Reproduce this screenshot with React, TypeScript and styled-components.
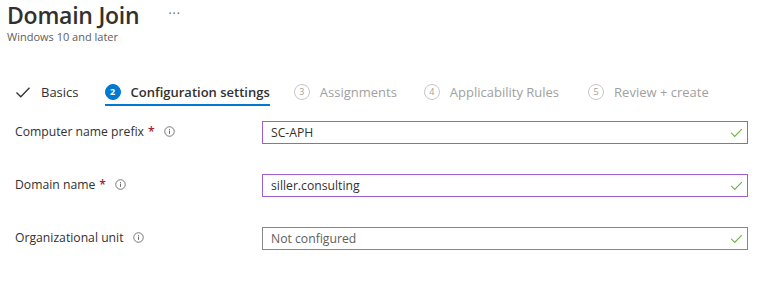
import React from "react";
import styled, { createGlobalStyle } from "styled-components";

const GlobalStyle = createGlobalStyle`
  html, body {
    margin: 0;
    padding: 0;
    background: #ffffff;
    font-family: "Open Sans", "Noto Sans", sans-serif;
    color: #323130;
  }
`;

const Page = styled.div`
  width: 768px;
  height: 281px;
  overflow: hidden;
`;

const Header = styled.div`
  padding: 2px 0 0 7px;
`;

const TitleRow = styled.div`
  display: flex;
  align-items: center;
  height: 27px;
`;

const Title = styled.h1`
  margin: 0;
  font-size: 23px;
  font-weight: 600;
  line-height: 27px;
  letter-spacing: -0.25px;
  color: #323130;
`;

const More = styled.span`
  margin-left: 29px;
  font-size: 12px;
  color: #605e5c;
  letter-spacing: 1px;
  line-height: 12px;
  position: relative;
  top: -2px;
`;

const Subtitle = styled.div`
  font-size: 11px;
  line-height: 15px;
  color: #605e5c;
`;

const Steps = styled.nav`
  display: flex;
  align-items: stretch;
  height: 26px;
  margin-top: 36px;
  padding-left: 15px;
`;

const Step = styled.div<{ $active?: boolean; $done?: boolean; $gap: number }>`
  display: flex;
  align-items: center;
  gap: 10px;
  margin-right: ${(p) => p.$gap}px;
  font-size: 13px;
  color: ${(p) => (p.$active || p.$done ? "#323130" : "#a19f9d")};
  font-weight: ${(p) => (p.$active ? 600 : 400)};
  border-bottom: 2px solid ${(p) => (p.$active ? "#0078d4" : "transparent")};
  box-sizing: border-box;
  padding-bottom: 1px;
`;

const Num = styled.span<{ $active?: boolean }>`
  width: 16px;
  height: 16px;
  border-radius: 50%;
  box-sizing: border-box;
  display: inline-flex;
  align-items: center;
  justify-content: center;
  font-size: 9px;
  font-weight: ${(p) => (p.$active ? 700 : 400)};
  background: ${(p) => (p.$active ? "#0078d4" : "transparent")};
  color: ${(p) => (p.$active ? "#ffffff" : "#a19f9d")};
  border: 1px solid ${(p) => (p.$active ? "#0078d4" : "#c8c6c4")};
`;

const Form = styled.div`
  display: flex;
  flex-direction: column;
  gap: 30px;
  margin-top: 15px;
  padding: 0 20px 0 15px;
`;

const Row = styled.div`
  display: grid;
  grid-template-columns: 247px 1fr;
  align-items: center;
`;

const Label = styled.label`
  display: flex;
  align-items: center;
  font-size: 12.2px;
  line-height: 16px;
  color: #323130;
  position: relative;
  top: -1px;
`;

const Req = styled.span`
  color: #a4262c;
  margin-left: 4px;
  font-weight: 600;
`;

const Info = styled.span`
  display: inline-flex;
  margin-left: 9px;
`;

const Field = styled.div<{ $valid?: boolean }>`
  display: flex;
  align-items: center;
  justify-content: space-between;
  height: 23px;
  box-sizing: border-box;
  border: 1px solid ${(p) => (p.$valid ? "#a35dcc" : "#8a8886")};
  padding: 0 4px 0 8px;
  font-size: 12.2px;
  color: ${(p) => (p.$valid ? "#323130" : "#605e5c")};
`;

function InfoIcon() {
  return (
    <svg width="11" height="11" viewBox="0 0 12 12">
      <circle cx="6" cy="6" r="5.2" fill="none" stroke="#605e5c" strokeWidth="0.9" />
      <rect x="5.5" y="5" width="1" height="3.6" fill="#605e5c" />
      <rect x="5.5" y="3.2" width="1" height="1" fill="#605e5c" />
    </svg>
  );
}

function Check({ color, size, w }: { color: string; size: number; w: number }) {
  return (
    <svg width={size} height={size} viewBox="0 0 16 16">
      <path d="M1.5 8.5 L5.8 12.8 L14.5 3.8" fill="none" stroke={color} strokeWidth={w} />
    </svg>
  );
}

const steps = [
  { n: 3, label: "Assignments", gap: 27 },
  { n: 4, label: "Applicability Rules", gap: 29 },
  { n: 5, label: "Review + create", gap: 0 },
];

const fields = [
  { label: "Computer name prefix", required: true, value: "SC-APH", valid: true },
  { label: "Domain name", required: true, value: "siller.consulting", valid: true },
  { label: "Organizational unit", required: false, value: "Not configured", valid: false },
];

export default function App() {
  return (
    <Page>
      <GlobalStyle />
      <Header>
        <TitleRow>
          <Title>Domain Join</Title>
          <More>···</More>
        </TitleRow>
        <Subtitle>Windows 10 and later</Subtitle>
      </Header>
      <Steps>
        <Step $done $gap={26}>
          <Check color="#323130" size={16} w={1.3} />
          Basics
        </Step>
        <Step $active $gap={24}>
          <Num $active>2</Num>
          Configuration settings
        </Step>
        {steps.map((s) => (
          <Step key={s.n} $gap={s.gap}>
            <Num>{s.n}</Num>
            {s.label}
          </Step>
        ))}
      </Steps>
      <Form>
        {fields.map((f) => (
          <Row key={f.label}>
            <Label>
              {f.label}
              {f.required && <Req>*</Req>}
              <Info>
                <InfoIcon />
              </Info>
            </Label>
            <Field $valid={f.valid}>
              {f.value}
              <Check color="#6bb33e" size={13} w={1.3} />
            </Field>
          </Row>
        ))}
      </Form>
    </Page>
  );
}
